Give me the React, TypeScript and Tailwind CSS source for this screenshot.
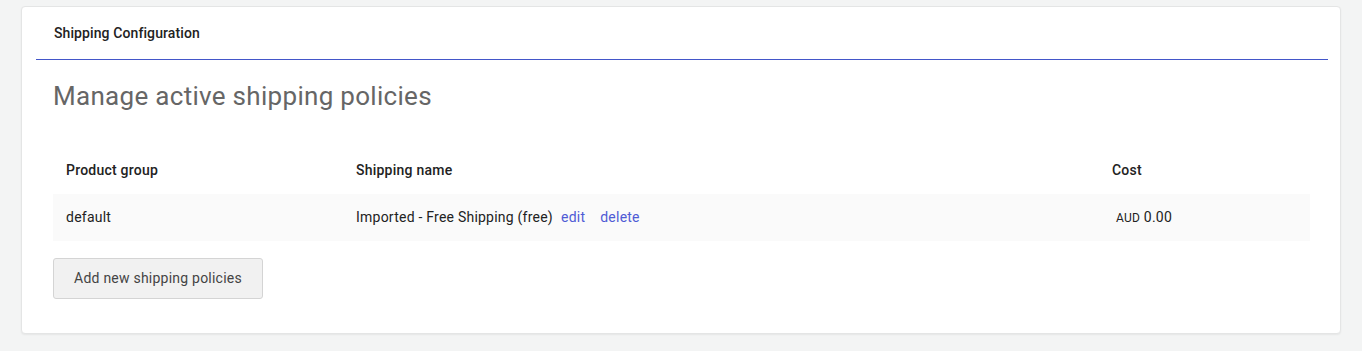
import React from 'react';

type Policy = {
  group: string;
  name: string;
  currency: string;
  amount: string;
};

const policies: Policy[] = [
  { group: 'default', name: 'Imported - Free Shipping (free)', currency: 'AUD', amount: '0.00' },
];

const App: React.FC = () => {
  return (
    <div className="min-h-[351px] bg-[#f3f4f4] pt-[6px] pl-[21px] pr-[21px] font-['Roboto',sans-serif] tracking-[0.23px]">
      <div className="bg-white rounded-[4px] border border-[#e4e5e5] shadow-[0_1px_2px_rgba(0,0,0,0.06)] h-[328px]">
        <div className="px-[14px] pr-[12px]">
          <div className="h-[53px] flex items-center pl-[18px] border-b border-[#4356c9]">
            <h2 className="text-[14px] tracking-[0.1px] font-medium text-[#222]">Shipping Configuration</h2>
          </div>
        </div>

        <div className="px-[31px]">
          <h1 className="mt-[20px] text-[26px] tracking-[0.3px] leading-[32px] text-[#666]">Manage active shipping policies</h1>

          <table className="mt-[34px] w-[1257px] text-[14px] text-[#222] border-collapse">
            <thead>
              <tr className="h-[48px]">
                <th className="text-left font-medium pl-[13px] w-[290px]">Product group</th>
                <th className="text-left font-medium pl-[13px]">Shipping name</th>
                <th className="text-left font-medium pl-[13px] w-[211px]">Cost</th>
              </tr>
            </thead>
            <tbody>
              {policies.map((p) => (
                <tr key={p.group} className="h-[47px] bg-[#fafafa]">
                  <td className="pl-[13px]">{p.group}</td>
                  <td className="pl-[13px]">
                    {p.name}
                    <a href="#" className="ml-[8px] text-[#4f5bd5]">edit</a>
                    <a href="#" className="ml-[15px] text-[#4f5bd5]">delete</a>
                  </td>
                  <td className="pl-[17px]">
                    <span className="text-[12px]">{p.currency}</span> {p.amount}
                  </td>
                </tr>
              ))}
            </tbody>
          </table>

          <button className="mt-[17px] h-[41px] w-[210px] bg-[#f1f1f1] border border-[#d4d4d4] rounded-[3px] text-[14px] text-[#444]">
            Add new shipping policies
          </button>
        </div>
      </div>
    </div>
  );
};

export default App;
